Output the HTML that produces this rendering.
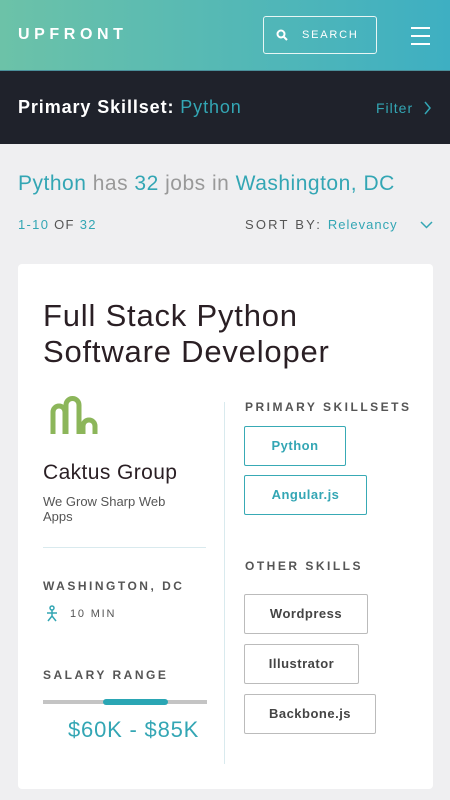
<!DOCTYPE html>
<html><head><style>
*{margin:0;padding:0;box-sizing:border-box}
body{width:450px;height:800px;overflow:hidden;background:#efeff1;font-family:"Liberation Sans",sans-serif;position:relative}
.a{position:absolute;white-space:nowrap}
.teal{color:#33a6b4}
.hdr{position:absolute;left:0;top:0;width:450px;height:70px;background:linear-gradient(90deg,#6cc2a8,#3eafc2)}
.bar{position:absolute;left:0;top:70px;width:450px;height:74px;background:#1f222b;border-top:1px solid #4a8f9a}
.card{position:absolute;left:18px;top:264px;width:415px;height:525px;background:#fff;border-radius:4px}
.lab{font-size:12px;font-weight:bold;letter-spacing:2.5px;color:#555}
.btn{position:absolute;height:40px;border:1.5px solid #38aab5;border-radius:2px;font-size:13px;font-weight:bold;color:#33a6b4;text-align:center;line-height:37px;letter-spacing:.5px}
.btn.g{border-color:#bbb;color:#444}
</style></head><body>
<div class="hdr"></div>
<div class="a" style="left:18px;top:26px;color:#fff;font-size:16px;font-weight:bold;letter-spacing:4.6px">UPFRONT</div>
<div class="a" style="left:263px;top:16px;width:114px;height:38px;border:1.5px solid #e8f6f4;border-radius:3px"></div>
<svg class="a" style="left:276px;top:29px" width="12" height="12" viewBox="0 0 12 12"><circle cx="5" cy="5" r="3.5" stroke="#fff" stroke-width="2" fill="none"/><path d="M7.5 7.5L11 11" stroke="#fff" stroke-width="2"/></svg>
<div class="a" style="left:302px;top:29px;color:#fff;font-size:11px;letter-spacing:1.8px">SEARCH</div>
<div class="a" style="left:411px;top:27px;width:19px;height:2px;background:#fff"></div>
<div class="a" style="left:411px;top:35px;width:19px;height:2px;background:#fff"></div>
<div class="a" style="left:411px;top:43px;width:19px;height:2px;background:#fff"></div>
<div class="bar"></div>
<div class="a" style="left:18px;top:97px;color:#fff;font-size:18px;font-weight:bold;letter-spacing:.9px">Primary Skillset: <span class="teal" style="font-weight:normal">Python</span></div>
<div class="a teal" style="left:376px;top:100px;font-size:14px;letter-spacing:1px">Filter</div>
<svg class="a" style="left:424px;top:101px" width="8" height="14"><path d="M1 1L6 7L1 13" stroke="#33a6b4" stroke-width="1.5" fill="none"/></svg>
<div class="a" style="left:18px;top:172px;font-size:21px;color:#999;letter-spacing:.5px"><span class="teal">Python</span> has <span class="teal">32</span> jobs in <span class="teal">Washington, DC</span></div>
<div class="a" style="left:18px;top:217px;font-size:13px;letter-spacing:1.3px;color:#555"><span class="teal">1-10</span> OF <span class="teal">32</span></div>
<div class="a" style="left:245px;top:217px;font-size:13px;letter-spacing:2.2px;color:#555">SORT BY: <span class="teal" style="letter-spacing:1px">Relevancy</span></div>
<svg class="a" style="left:420px;top:221px" width="13" height="8"><path d="M1 1L6.5 6.5L12 1" stroke="#33a6b4" stroke-width="1.5" fill="none"/></svg>
<div class="card"></div>
<div class="a" style="left:43px;top:298px;font-size:31px;line-height:36px;color:#2a1f24;letter-spacing:.8px">Full Stack Python<br>Software Developer</div>
<svg class="a" style="left:49px;top:396px" width="50" height="40" viewBox="0 0 50 40"><path d="M4 38V16a6 6 0 0 1 12 0V38M17 38V9a6.5 6.5 0 0 1 13 0V38M34 38V30a6 6 0 0 1 12 0V38" stroke="#8cb65a" stroke-width="5" fill="none"/></svg>
<div class="a" style="left:43px;top:461px;font-size:21px;color:#2a1f24;letter-spacing:.4px">Caktus Group</div>
<div class="a" style="left:43px;top:494px;font-size:13px;line-height:15px;color:#555">We Grow Sharp Web<br>Apps</div>
<div class="a" style="left:43px;top:547px;width:163px;height:1px;background:#d9eaee"></div>
<div class="a lab" style="left:43px;top:579px">WASHINGTON, DC</div>
<svg class="a" style="left:45px;top:605px" width="14" height="17" viewBox="0 0 14 17"><circle cx="7" cy="3" r="2" stroke="#33a6b4" stroke-width="1.5" fill="none"/><path d="M7 5V11M2 8H12M7 11L3 16M7 11L11 16" stroke="#33a6b4" stroke-width="1.5" fill="none"/></svg>
<div class="a" style="left:70px;top:608px;font-size:11px;letter-spacing:1.8px;color:#555">10 MIN</div>
<div class="a lab" style="left:43px;top:668px">SALARY RANGE</div>
<div class="a" style="left:43px;top:700px;width:164px;height:4px;background:#c4c4c4"></div>
<div class="a" style="left:103px;top:699px;width:65px;height:6px;border-radius:3px;background:#2aa6b4"></div>
<div class="a teal" style="left:68px;top:717px;font-size:22px;letter-spacing:.8px">$60K - $85K</div>
<div class="a" style="left:224px;top:402px;width:1px;height:362px;background:#d9eaee"></div>
<div class="a lab" style="left:245px;top:400px">PRIMARY SKILLSETS</div>
<div class="btn" style="left:244px;top:426px;width:102px">Python</div>
<div class="btn" style="left:244px;top:475px;width:123px">Angular.js</div>
<div class="a lab" style="left:245px;top:559px">OTHER SKILLS</div>
<div class="btn g" style="left:244px;top:594px;width:124px">Wordpress</div>
<div class="btn g" style="left:244px;top:644px;width:115px">Illustrator</div>
<div class="btn g" style="left:244px;top:694px;width:132px">Backbone.js</div>
</body></html>
